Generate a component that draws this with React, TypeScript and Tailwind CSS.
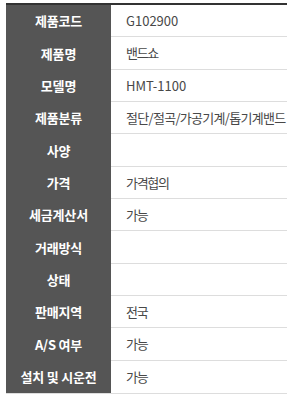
const rows: { label: string; value: string; track?: string }[] = [
  { label: '제품코드', value: 'G102900' },
  { label: '제품명', value: '밴드쇼' },
  { label: '모델명', value: 'HMT-1100' },
  { label: '제품분류', value: '절단/절곡/가공기계/톱기계밴드', track: 'tracking-[-0.7px]' },
  { label: '사양', value: '' },
  { label: '가격', value: '가격협의' },
  { label: '세금계산서', value: '가능' },
  { label: '거래방식', value: '' },
  { label: '상태', value: '' },
  { label: '판매지역', value: '전국' },
  { label: 'A/S 여부', value: '가능' },
  { label: '설치 및 시운전', value: '가능' },
];

const hasHangul = (s: string) => /[\uac00-\ud7a3]/.test(s);

export default function App() {
  return (
    <div className="w-[287px] h-[403px] overflow-hidden bg-white pl-[6px] pt-[3px] font-['Noto_Sans_CJK_KR',sans-serif]">
      <div className="w-[420px] border-t-2 border-[#333333] border-b border-b-[#dddddd]">
        {rows.map((row, i) => (
          <div key={row.label} className="flex h-[32.33px]">
            <div className="w-[105px] shrink-0 bg-[#555555] flex items-center justify-center text-[13px] font-bold text-white tracking-[-0.2px] whitespace-pre">
              {row.label}
            </div>
            <div
              className={`flex-1 flex items-center pl-[15px] text-[13px] text-[#484848] whitespace-nowrap ${
                i < rows.length - 1 ? 'border-b border-[#dddddd]' : ''
              } ${row.track ?? (hasHangul(row.value) ? 'tracking-[-1.3px]' : '')}`}
            >
              {row.value}
            </div>
          </div>
        ))}
      </div>
    </div>
  );
}
